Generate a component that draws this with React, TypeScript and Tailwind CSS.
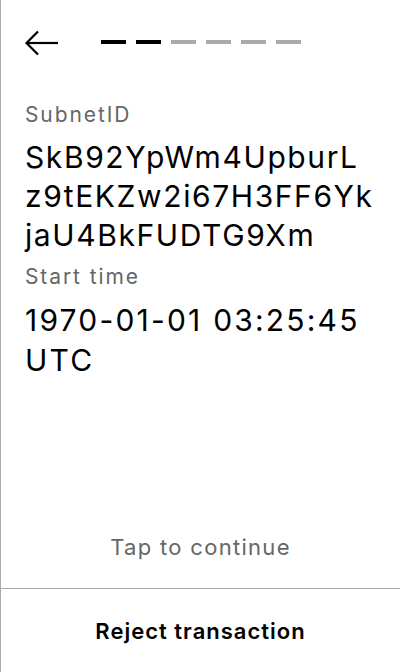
export default function App() {
  const steps = [true, true, false, false, false, false]
  const subnet = ['SkB92YpWm4UpburL', 'z9tEKZw2i67H3FF6Yk', 'jaU4BkFUDTG9Xm']

  return (
    <div
      className="h-[672px] w-[400px] flex flex-col bg-white border-l border-[#aaaaaa] text-black"
      style={{ fontFamily: 'Inter, "Noto Sans", sans-serif' }}
    >
      {/* Header: back arrow and progress */}
      <div className="mt-[30px] h-[26px] flex items-center pl-[23px]">
        <svg width="34" height="26" viewBox="0 0 34 26" fill="none" stroke="black" strokeWidth="2.2">
          <path d="M34 13 H3" />
          <path d="M14 1.5 L2.5 13 L14 24.5" />
        </svg>
        <div className="ml-[43px] flex gap-[10px] -mt-[2px]">
          {steps.map((done, i) => (
            <div key={i} className={done ? 'w-[25px] h-[4px] bg-black' : 'w-[25px] h-[4px] bg-[#aaaaaa]'} />
          ))}
        </div>
      </div>

      {/* Fields */}
      <div className="px-[24px] mt-[47px]">
        <div className="text-[21px] leading-[24px] tracking-[1.9px] text-[#666666]">SubnetID</div>
        <div className="mt-[11px] text-[30px] leading-[39px] tracking-[1.6px]">
          {subnet.map((line) => (
            <div key={line}>{line}</div>
          ))}
        </div>
        <div className="mt-[10px] text-[21px] leading-[24px] tracking-[1.9px] text-[#666666]">Start time</div>
        <div className="mt-[11px] text-[30px] leading-[40px] tracking-[2.2px]">
          <div>1970-01-01 03:25:45</div>
          <div>UTC</div>
        </div>
      </div>

      <div className="flex-1" />

      <div className="pb-[28px] text-center text-[22px] leading-[26px] tracking-[1.3px] text-[#666666]">
        Tap to continue
      </div>
      <div className="h-[84px] border-t border-[#aaaaaa] flex items-center justify-center">
        <span className="text-[22px] leading-[26px] tracking-[1px] font-semibold">Reject transaction</span>
      </div>
    </div>
  )
}
